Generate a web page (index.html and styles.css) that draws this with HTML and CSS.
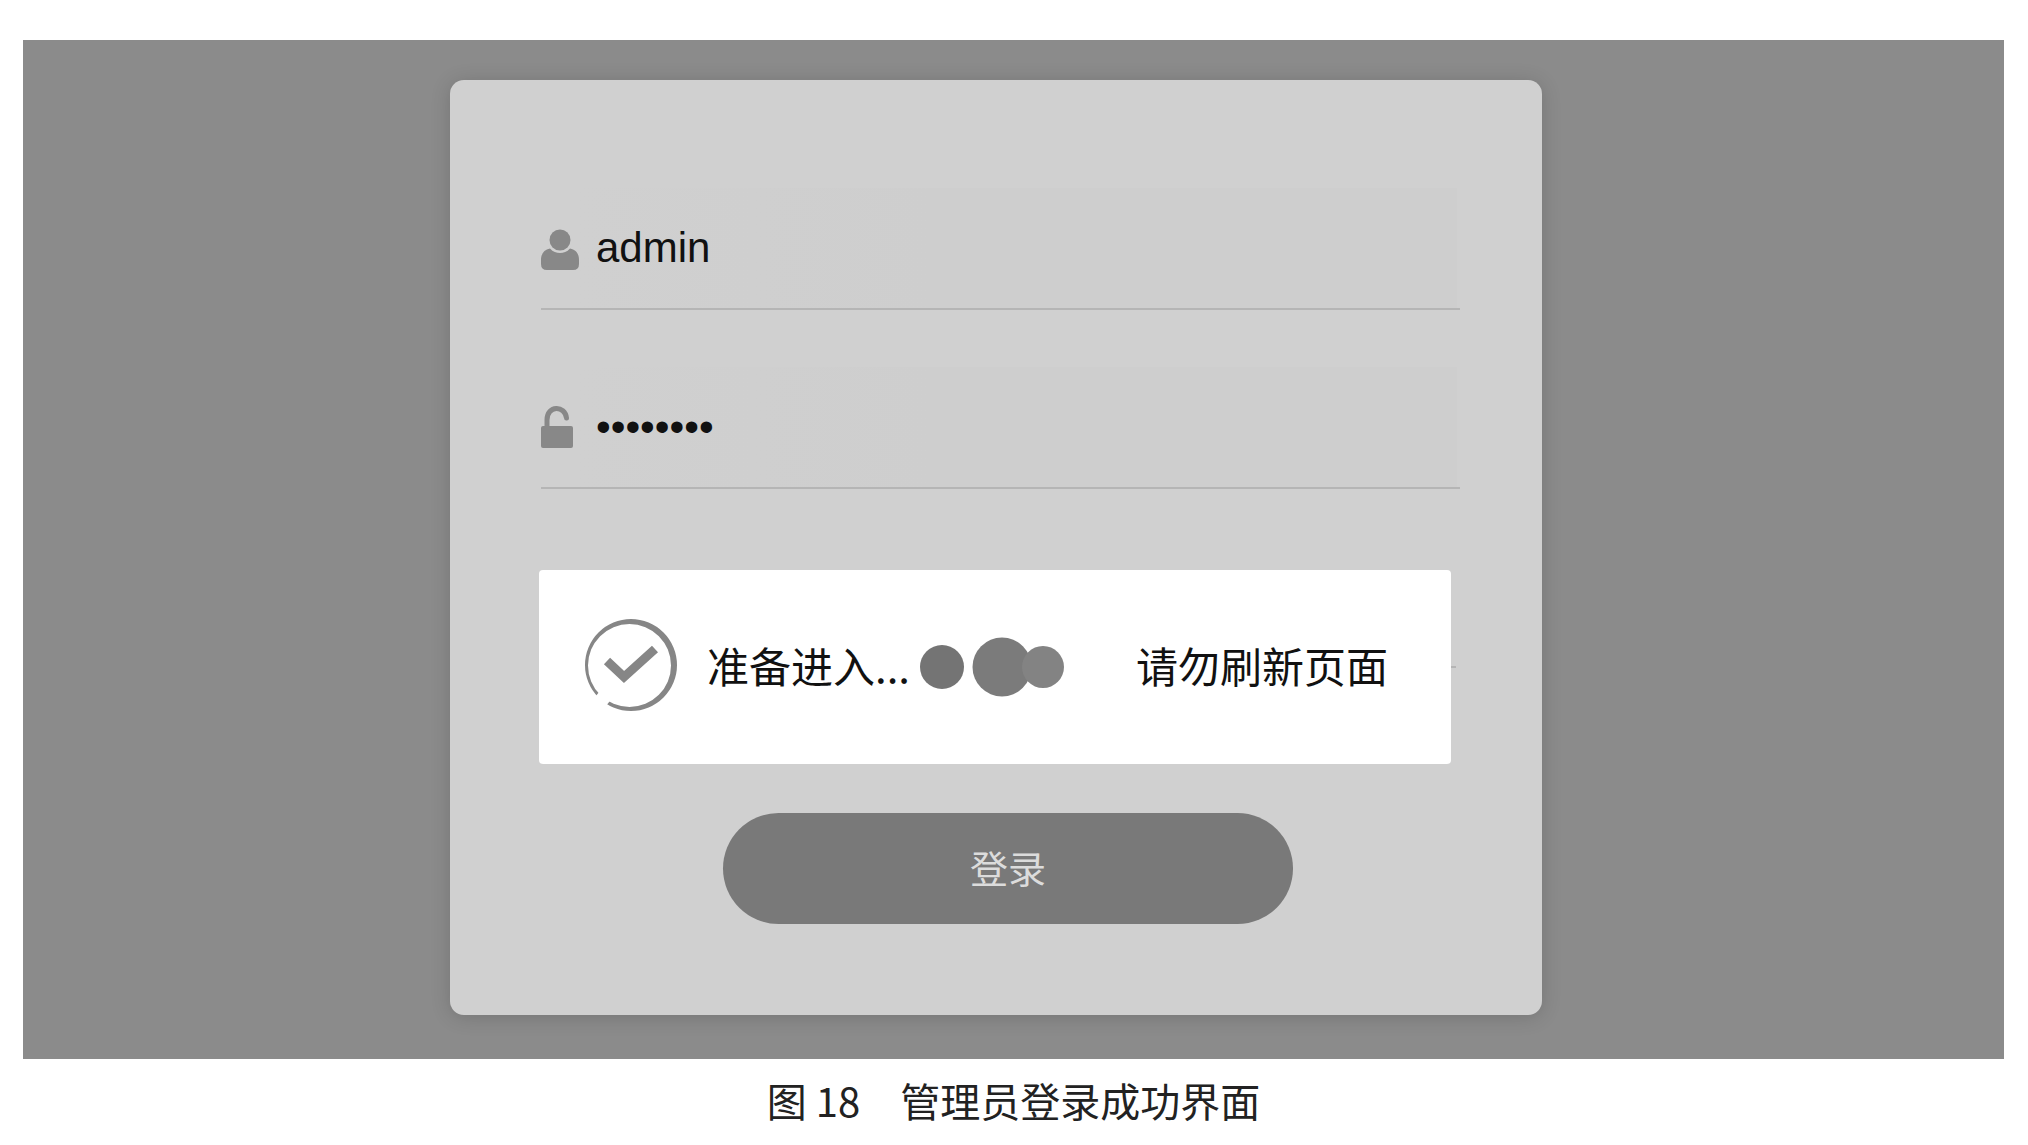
FILE: index.html
```html
<!DOCTYPE html>
<html lang="zh-CN">
<head>
    <meta charset="UTF-8">
    <title>管理员登录</title>
    <link rel="stylesheet" href="styles.css">
</head>
<body>
    <figure class="figura">
        <div class="login-fondo">
            <form class="login-card">
                <!-- Usuario -->
                <div class="campo">
                    <label for="usuario" aria-label="usuario">
                        <svg class="icono" viewBox="0 0 38 42">
                            <circle cx="19" cy="13" r="10.5"/>
                            <path d="M9 21.500C12 25 15.500 26 19 26S26 25 29 21.500C35 22.500 38 27 38 33V37Q38 43 32 43H6Q0 43 0 37V33C0 27 3 22.500 9 21.500Z"/>
                        </svg>
                    </label>
                    <input id="usuario" type="text" value="admin" autocomplete="off">
                </div>

                <!-- Contraseña -->
                <div class="campo">
                    <label for="clave" aria-label="clave">
                        <svg class="icono" viewBox="0 0 38 42">
                            <path class="arco" d="M6 22V14C6 -1 24 -1 25.500 12"/>
                            <rect x="0" y="20" width="32" height="22" rx="2"/>
                        </svg>
                    </label>
                    <input id="clave" type="password" value="admin123" autocomplete="off">
                </div>

                <div class="campo campo-vacio"></div>

                <button class="boton-login" type="submit">登录</button>

                <!-- Aviso de entrada -->
                <div class="aviso" role="status">
                    <svg class="aviso-check" viewBox="0 0 92 92">
                        <path class="aro" fill-rule="evenodd" d="M0 46A46 46 0 1 1 92 46A46 46 0 1 1 0 46ZM3 46.500A41.500 41.500 0 1 0 86 46.500A41.500 41.500 0 1 0 3 46.500Z"/>
                        <path class="hueco" d="M24 72L11 88"/>
                        <path class="marca" d="M22 42L39 58L70 30"/>
                    </svg>
                    <span class="aviso-texto">准备进入...</span>
                    <svg class="aviso-puntos" viewBox="0 0 146 60">
                        <circle cx="22" cy="30" r="22" fill="#747474"/>
                        <circle cx="82" cy="30" r="29.500" fill="#7b7b7b"/>
                        <circle cx="123" cy="30" r="21" fill="#838383"/>
                    </svg>
                    <span class="aviso-texto">请勿刷新页面</span>
                </div>
            </form>
        </div>
        <figcaption class="titulo">图 18　管理员登录成功界面</figcaption>
    </figure>
</body>
</html>
```
FILE: styles.css
```css
body {
    margin: 0;
    background-color: #fff;
    font-family: "Liberation Sans", "Noto Sans CJK SC", sans-serif;
}

.figura {
    margin: 0;
    padding: 40px 24px 0 23px;
}

/* Fondo gris y columnas a los lados de la tarjeta */
.login-fondo {
    display: grid;
    grid-template-columns: 427fr 1092fr 462fr;
    padding: 40px 0 44px;
    background-color: #8b8b8b;
}

.login-card {
    grid-column: 2;
    position: relative;
    box-sizing: border-box;
    padding: 51px 82px 91px 91px;
    border-radius: 14px;
    background-color: #d0d0d0;
    box-shadow: 0 2px 20px rgba(0, 0, 0, 0.16);
}

.campo {
    display: flex;
    align-items: center;
    box-sizing: border-box;
    height: 179px;
    padding-top: 56px;
    border-bottom: 2px solid #b5b5b5;
}

.campo-vacio {
    margin-right: 4px;
}

.icono {
    display: block;
    width: 38px;
    height: 42px;
    fill: #888;
    overflow: visible;
}

.icono .arco {
    fill: none;
    stroke: #888;
    stroke-width: 5px;
    stroke-linecap: round;
}

.campo input {
    flex: 1;
    min-width: 0;
    height: 120px;
    box-sizing: border-box;
    margin-right: 3px;
    padding: 0 0 0 17px;
    border: none;
    outline: none;
    background: linear-gradient(to right, #d0d0d0, #cecece 40%);
    font-family: inherit;
    font-size: 42px;
    color: #111;
}

.boton-login {
    display: block;
    width: 62%;
    height: 111px;
    margin: 145px 0 0 182px;
    padding: 0 0 4px;
    border: none;
    border-radius: 56px;
    background-color: #797979;
    font-family: "Noto Sans CJK SC", sans-serif;
    font-size: 38px;
    color: #dcdcdc;
    cursor: pointer;
}

/* Aviso blanco sobre el formulario */
.aviso {
    position: absolute;
    top: 490px;
    left: 89px;
    right: 91px;
    display: flex;
    align-items: center;
    box-sizing: border-box;
    height: 194px;
    padding: 0 46px;
    border-radius: 4px;
    background-color: #fff;
}

.aviso-check {
    width: 92px;
    height: 92px;
    margin: 0 30px 4px 0;
}

.aviso-check .aro {
    fill: #868686;
}

/* Corte abajo a la izquierda del aro */
.aviso-check .hueco {
    fill: none;
    stroke: #fff;
    stroke-width: 14px;
}

.aviso-check .marca {
    fill: none;
    stroke: #868686;
    stroke-width: 9px;
}

.aviso-texto {
    padding-bottom: 4px;
    font-family: "Noto Sans CJK SC", sans-serif;
    font-size: 42px;
    line-height: 60px;
    color: #111;
    white-space: nowrap;
}

.aviso-puntos {
    width: 146px;
    height: 60px;
    margin: 0 70px 0 10px;
}

.titulo {
    padding: 11px 0;
    font-family: "Noto Sans CJK SC", sans-serif;
    font-size: 40px;
    line-height: 60px;
    text-align: center;
    color: #222;
}
```
